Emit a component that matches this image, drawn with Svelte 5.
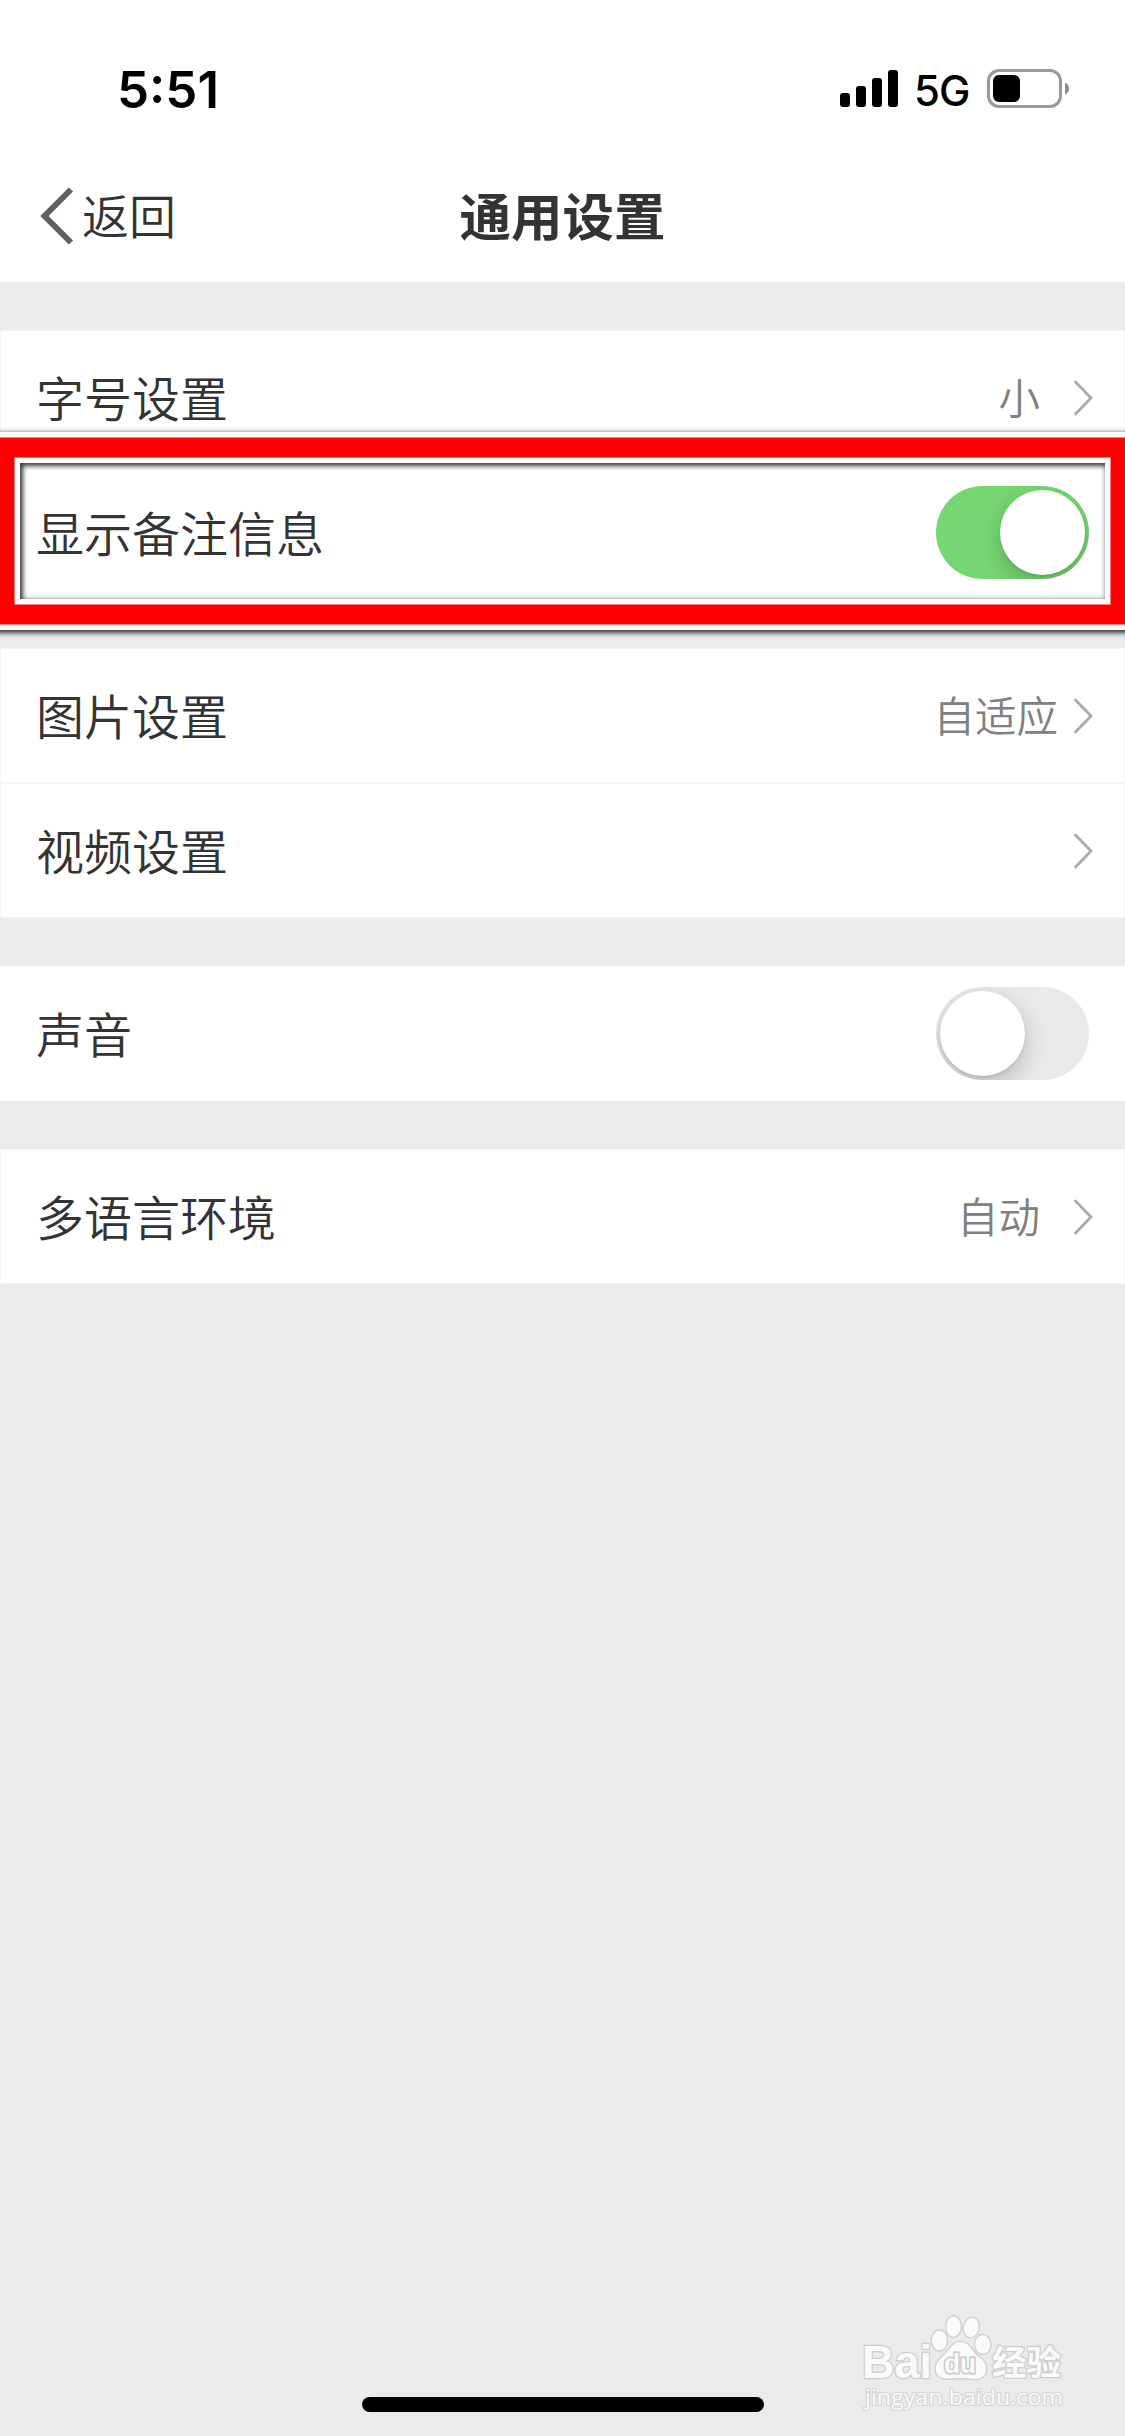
<script>
  let showRemark = $state(true);
  let sound = $state(false);

  const signalBars = [
    { x: 0, h: 14 },
    { x: 16, h: 21 },
    { x: 32, h: 29 },
    { x: 48, h: 37 }
  ];
</script>

{#snippet arrow()}
  <svg class="arrow" width="20" height="36" viewBox="0 0 20 36">
    <path d="M2.500 2 L18 18 L2.500 34" />
  </svg>
{/snippet}

{#snippet linkRow(label, value, padded)}
  <div class="row link">
    <span class="label">{label}</span>
    <span class="value" class:padded>{value}</span>
    {@render arrow()}
  </div>
{/snippet}

<main class="screen">
  <header>
    <div class="status-bar">
      <span class="time">5:51</span>
      <div class="status-icons">
        <svg width="58" height="37" viewBox="0 0 58 37">
          {#each signalBars as bar}
            <rect x={bar.x} y={37 - bar.h} width="10" height={bar.h} rx="3" />
          {/each}
        </svg>
        <span class="network">5G</span>
        <svg class="battery" width="83" height="39" viewBox="0 0 83 39">
          <rect x="1.5" y="1.5" width="72" height="36" rx="10.5" fill="none" stroke="#999" stroke-width="3" />
          <rect x="6" y="6" width="27" height="27" rx="6" />
          <path d="M78 13.5 Q82 15.5 82 19.5 Q82 23.500 78 25.500 Z" fill="#8c8c8c" />
        </svg>
      </div>
    </div>
    <nav>
      <button class="back">
        <svg width="34" height="58" viewBox="0 0 34 58">
          <path d="M31 2.500 L4.500 29 L31 55.500" />
        </svg>
        <span>返回</span>
      </button>
      <h1>通用设置</h1>
    </nav>
  </header>

  <div class="settings">
    <section>
      {@render linkRow('字号设置', '小', true)}
      <div class="row">
        <span class="label">显示备注信息</span>
        <button
          class="switch"
          class:on={showRemark}
          aria-label="显示备注信息"
          onclick={() => (showRemark = !showRemark)}
        ><i></i></button>
        <div class="highlight"></div>
      </div>
    </section>

    <section>
      {@render linkRow('图片设置', '自适应', false)}
      {@render linkRow('视频设置', '', false)}
    </section>

    <section>
      <div class="row">
        <span class="label">声音</span>
        <button
          class="switch"
          class:on={sound}
          aria-label="声音"
          onclick={() => (sound = !sound)}
        ><i></i></button>
      </div>
    </section>

    <section>
      {@render linkRow('多语言环境', '自动', true)}
    </section>
  </div>

  <!-- Watermark -->
  <svg class="watermark" width="285" height="146" viewBox="0 0 285 146">
    <g class="mark">
      <text x="22" y="87.500" font-size="46" textLength="70" lengthAdjust="spacingAndGlyphs">Bai</text>
      <ellipse cx="99.500" cy="50.500" rx="7.500" ry="10" />
      <ellipse cx="113.500" cy="36.500" rx="7.200" ry="10.300" />
      <ellipse cx="131.300" cy="37.500" rx="7.300" ry="9.800" transform="rotate(12 131.300 37.500)" />
      <ellipse cx="142.700" cy="54.500" rx="7.500" ry="9.500" />
      <path d="M120.500 52 C112 52 110 60 103 66 C96 72 94 78 97 84 C101 91 112 88 121 88 C130 88 141 92 145 84 C148 77 145 71 138 66 C131 60 129 52 120.500 52 Z" />
      <text class="du" x="104" y="82.500" font-size="27" textLength="32" lengthAdjust="spacingAndGlyphs">du</text>
      <text class="cn" x="152" y="85" font-size="34" textLength="69" lengthAdjust="spacingAndGlyphs">经验</text>
    </g>
    <text class="url" x="25" y="115" font-size="22" textLength="198" lengthAdjust="spacingAndGlyphs">jingyan.baidu.com</text>
  </svg>

  <div class="home-indicator"></div>
</main>

<style>
  :global(body) {
    margin: 0;
  }

  .screen {
    position: relative;
    box-sizing: border-box;
    width: 1125px;
    height: 2436px;
    overflow: hidden;
    display: flex;
    flex-direction: column;
    background: #ebebeb;
    color: #333;
    font-family: 'Noto Sans CJK SC', sans-serif;
    font-weight: 350;
  }

  button {
    border: 0;
    padding: 0;
    background: none;
    font: inherit;
    color: inherit;
  }

  header {
    height: 282px;
    background: #fff;
  }

  .status-bar {
    height: 150px;
    box-sizing: border-box;
    padding: 57px 55px 0 117px;
    display: flex;
    justify-content: space-between;
    align-items: flex-start;
    font-family: Inter, sans-serif;
    color: #000;
  }

  .time {
    padding-top: 2px;
    font-size: 51px;
    line-height: 62px;
    font-weight: 600;
  }

  .status-icons {
    display: flex;
    align-items: center;
    height: 63px;
  }

  .network {
    width: 54px;
    margin: 5px 19px 0 16px;
    font-size: 42px;
    font-weight: 450;
    line-height: 50px;
    letter-spacing: -1px;
  }

  nav {
    display: grid;
    grid-template-columns: 1fr auto 1fr;
    align-items: center;
    height: 132px;
  }

  .back {
    display: flex;
    align-items: center;
    gap: 8px;
    padding-left: 40px;
    font-size: 47px;
    line-height: 70px;
  }

  .back span {
    padding-bottom: 5px;
  }

  .back path {
    fill: none;
    stroke: #606060;
    stroke-width: 6;
  }

  h1 {
    margin: 0;
    padding-bottom: 5px;
    font-size: 51.5px;
    line-height: 74px;
    font-weight: 700;
  }

  .settings {
    display: flex;
    flex-direction: column;
    gap: 48px;
    padding-top: 48px;
  }

  .row {
    position: relative;
    box-sizing: border-box;
    height: 135px;
    display: flex;
    align-items: center;
    padding: 0 36px;
    background: #fff;
  }

  .link {
    border: 1px solid #f5f5f5;
    padding: 0 31px 0 35px;
  }

  .label {
    flex: 1;
    padding-bottom: 3px;
    font-size: 48px;
    line-height: 70px;
  }

  .value {
    margin-right: 15px;
    padding-bottom: 4px;
    font-size: 41.5px;
    line-height: 60px;
    color: #808080;
  }

  .value.padded {
    margin-right: 33px;
  }

  .arrow path {
    fill: none;
    stroke: #aaa;
    stroke-width: 2.8;
    stroke-linecap: round;
  }

  .switch {
    width: 153px;
    height: 93px;
    box-sizing: border-box;
    padding: 4px;
    border-radius: 47px;
    background: #e9e9e9;
    overflow: hidden;
    display: flex;
    justify-content: flex-start;
  }

  .switch i {
    width: 85px;
    height: 85px;
    border-radius: 50%;
    background: #fff;
    box-shadow: 0 9px 24px rgba(0, 0, 0, 0.2), 0 2px 3px rgba(0, 0, 0, 0.08);
  }

  .switch.on {
    background: #76d772;
    justify-content: flex-end;
  }

  /* red frame drawn over the row and its neighbours */
  .highlight {
    position: absolute;
    top: -2px;
    left: 20px;
    right: 20px;
    height: 136px;
    z-index: 1;
    pointer-events: none;
    box-shadow:
      inset 3px 3px 5px rgba(0, 0, 0, 0.7),
      inset 0 0 5px rgba(0, 0, 0, 0.4),
      0 0 0 5.5px #fff,
      0 0 0 25.5px #f00,
      0 0 0 31px #fff,
      0 0 5px 31px rgba(0, 0, 0, 0.4),
      0 3px 5px 31px rgba(0, 0, 0, 0.7);
  }

  .watermark {
    position: absolute;
    left: 840px;
    top: 2290px;
  }

  .mark {
    fill: #fafafa;
    stroke: #cecece;
    stroke-width: 2.6;
    paint-order: stroke;
    font-family: 'Liberation Sans', sans-serif;
    font-weight: 700;
  }

  .mark .du {
    stroke: #c8c8c8;
    stroke-width: 3;
  }

  .mark .cn {
    font-family: 'Noto Sans CJK SC', sans-serif;
  }

  .url {
    fill: #fafafa;
    stroke: #d4d4d4;
    stroke-width: 2.2;
    paint-order: stroke;
    font-family: 'Open Sans', sans-serif;
    font-weight: 400;
  }

  .home-indicator {
    width: 402px;
    height: 15px;
    margin: auto auto 24px;
    border-radius: 8px;
    background: #000;
  }
</style>
